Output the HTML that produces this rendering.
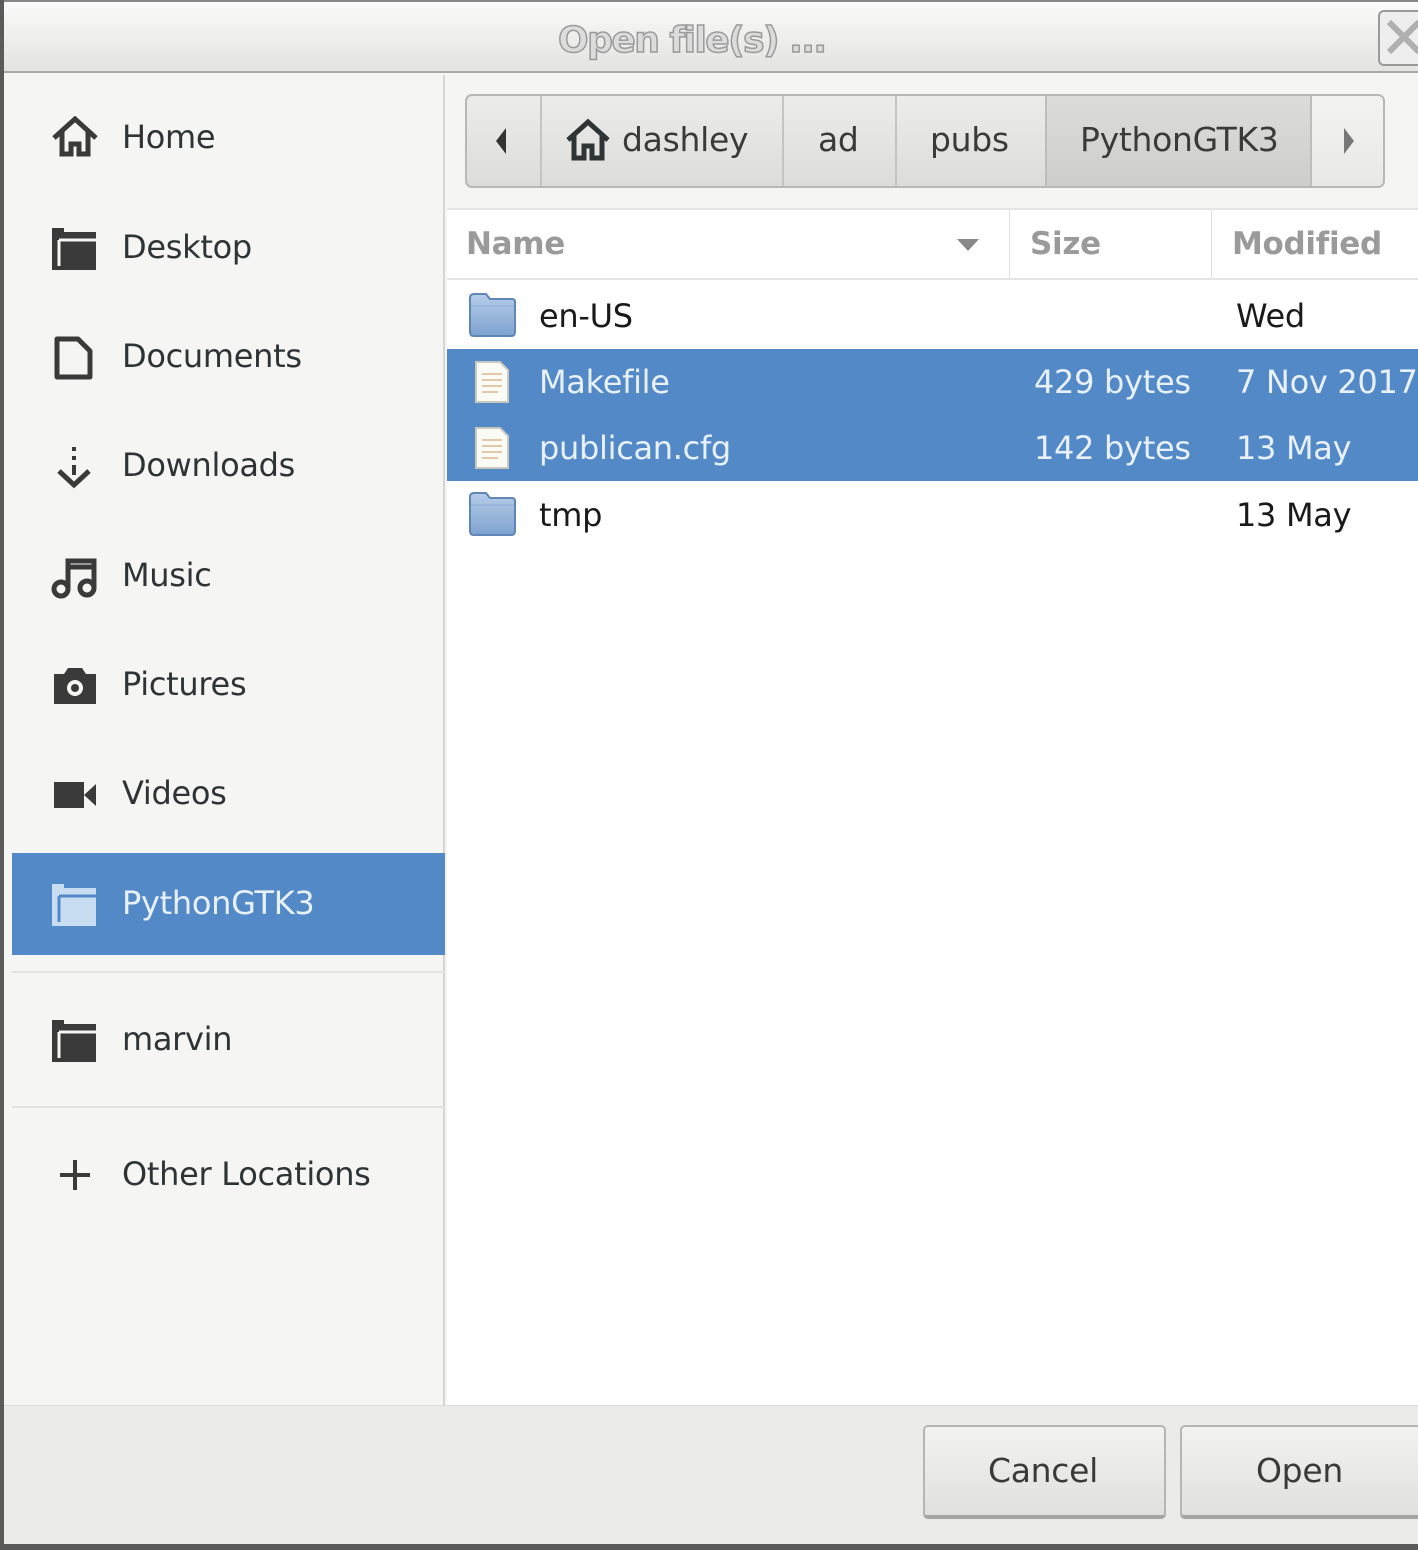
<!DOCTYPE html>
<html><head><meta charset="utf-8"><style>
*{margin:0;padding:0;box-sizing:border-box}
body{width:1418px;height:1550px;overflow:hidden;background:#f5f5f3;font-family:"DejaVu Sans","Liberation Sans",sans-serif;position:relative;color:#2e3436}
.a{position:absolute}
.t{position:absolute;height:50px;line-height:50px;font-size:32px;white-space:nowrap;letter-spacing:-0.3px}
</style></head><body>
<div class="a" style="left:0;top:0;width:4px;height:1550px;background:#5a5a5a"></div>
<div class="a" style="left:4px;top:0;width:1414px;height:73px;background:linear-gradient(#fafafa,#e3e3e1);border-bottom:2px solid #a9a9a7;border-top:2px solid #888"></div>
<div class="t" style="left:558px;top:16px;font-size:36px;font-weight:bold;color:#dcdcdc;-webkit-text-stroke:1.5px #9a9a9a;letter-spacing:-1.5px">Open file(s) ...</div>
<div class="a" style="left:1378px;top:10px;width:50px;height:56px;border:2px solid #9a9a9a;border-radius:6px;background:#eee"></div>
<svg class="a" style="left:1385px;top:18px" width="40" height="40"><path d="M4 4L34 34M34 4L4 34" stroke="#b0b0b0" stroke-width="6"/></svg>
<div class="a" style="left:4px;top:75px;width:441px;height:1330px;background:#f5f5f3;border-right:2px solid #d6d6d4"></div>
<div class="a" style="left:447px;top:75px;width:971px;height:1330px;background:#fff"></div>
<div class="a" style="left:447px;top:75px;width:971px;height:133px;background:#f5f5f3"></div>
<div class="a" style="left:465px;top:94px;width:920px;height:94px;border:2px solid #b8b8b6;border-radius:7px;background:linear-gradient(#ececea,#dcdcda);overflow:hidden">
 <div class="a" style="left:73px;top:0;width:2px;height:94px;background:#c4c4c2"></div>
 <div class="a" style="left:315px;top:0;width:2px;height:94px;background:#c4c4c2"></div>
 <div class="a" style="left:428px;top:0;width:2px;height:94px;background:#c4c4c2"></div>
 <div class="a" style="left:578px;top:0;width:267px;height:94px;background:linear-gradient(#dcdcda,#cdcdcb);border-left:2px solid #bdbdbb;border-right:2px solid #bdbdbb"></div>
 <div class="a" style="left:845px;top:0;width:75px;height:94px;background:linear-gradient(#f3f3f1,#e8e8e6)"></div>
</div>
<svg class="a" style="left:492px;top:126px" width="20" height="30"><path d="M14 2L4 15L14 28Z" fill="#333"/></svg>
<svg class="a" style="left:1340px;top:126px" width="20" height="30"><path d="M4 2L14 15L4 28Z" fill="#777"/></svg>
<svg class="a" style="left:564px;top:118px" width="48" height="44"><path d="M4 22L24 4L44 22M10 18V40H20V28H28V40H38V18" fill="none" stroke="#2e3436" stroke-width="5"/></svg>
<div class="t" style="left:622px;top:115px;font-size:33px;color:#3a3a3a">dashley</div>
<div class="t" style="left:818px;top:115px;font-size:33px;color:#3a3a3a">ad</div>
<div class="t" style="left:930px;top:115px;font-size:33px;color:#3a3a3a">pubs</div>
<div class="t" style="left:1080px;top:115px;font-size:33px;color:#3a3a3a">PythonGTK3</div>
<div class="a" style="left:447px;top:208px;width:971px;height:2px;background:#e4e4e2"></div>
<div class="a" style="left:447px;top:278px;width:971px;height:2px;background:#e4e4e2"></div>
<div class="a" style="left:1009px;top:210px;width:1px;height:68px;background:#e0e0de"></div>
<div class="a" style="left:1211px;top:210px;width:1px;height:68px;background:#e0e0de"></div>
<div class="t" style="left:466px;top:219px;font-weight:bold;color:#9a9a9a;font-size:31px">Name</div>
<svg class="a" style="left:955px;top:237px" width="26" height="16"><path d="M2 2H24L13 14Z" fill="#888"/></svg>
<div class="t" style="left:1030px;top:219px;font-weight:bold;color:#9a9a9a;font-size:31px">Size</div>
<div class="t" style="left:1232px;top:219px;font-weight:bold;color:#9a9a9a;font-size:31px">Modified</div>
<div class="a" style="left:447px;top:349px;width:971px;height:132px;background:#5289c6"></div>
<svg class="a" style="left:468px;top:292px" width="50" height="46"><defs><linearGradient id="fg" x1="0" y1="0" x2="0" y2="1"><stop offset="0" stop-color="#b6cde8"/><stop offset="1" stop-color="#7ea3d0"/></linearGradient></defs><path d="M2 6Q2 2 6 2H18L22 7H44Q47 7 47 10V40Q47 44 43 44H6Q2 44 2 40Z" fill="url(#fg)" stroke="#5f86b5" stroke-width="2"/><path d="M3 14H46" stroke="#9ab8dd" stroke-width="2"/></svg>
<svg class="a" style="left:468px;top:491px" width="50" height="46"><path d="M2 6Q2 2 6 2H18L22 7H44Q47 7 47 10V40Q47 44 43 44H6Q2 44 2 40Z" fill="url(#fg)" stroke="#5f86b5" stroke-width="2"/><path d="M3 14H46" stroke="#9ab8dd" stroke-width="2"/></svg>
<svg class="a" style="left:474px;top:360px" width="36" height="44"><path d="M2 2H26L34 10V42H2Z" fill="#fbfbf6" stroke="#c9c9c0" stroke-width="2"/><path d="M8 14H28M8 20H28M8 26H28M8 32H24" stroke="#e3c9a8" stroke-width="2"/></svg>
<svg class="a" style="left:474px;top:426px" width="36" height="44"><path d="M2 2H26L34 10V42H2Z" fill="#fbfbf6" stroke="#c9c9c0" stroke-width="2"/><path d="M8 14H28M8 20H28M8 26H28M8 32H24" stroke="#e3c9a8" stroke-width="2"/></svg>
<div class="t" style="left:539px;top:291px;color:#1a1a1a">en-US</div>
<div class="t" style="left:1236px;top:291px;color:#1a1a1a">Wed</div>
<div class="t" style="left:539px;top:357px;color:#e8f0fa">Makefile</div>
<div class="t" style="left:1034px;top:357px;color:#e8f0fa">429 bytes</div>
<div class="t" style="left:1236px;top:357px;color:#e8f0fa">7 Nov 2017</div>
<div class="t" style="left:539px;top:423px;color:#e8f0fa">publican.cfg</div>
<div class="t" style="left:1034px;top:423px;color:#e8f0fa">142 bytes</div>
<div class="t" style="left:1236px;top:423px;color:#e8f0fa">13 May</div>
<div class="t" style="left:539px;top:490px;color:#1a1a1a">tmp</div>
<div class="t" style="left:1236px;top:490px;color:#1a1a1a">13 May</div>
<div class="a" style="left:12px;top:853px;width:433px;height:102px;background:#5289c6"></div>
<div class="a" style="left:12px;top:971px;width:433px;height:2px;background:#e2e2e0"></div>
<div class="a" style="left:12px;top:1106px;width:433px;height:2px;background:#e2e2e0"></div>
<svg class="a" style="left:50px;top:116px" width="50" height="42"><path d="M4 22L25 3L46 22M12 16V38H21V28H29V38H38V16" fill="none" stroke="#3a3a3a" stroke-width="5"/></svg>
<svg class="a" style="left:50px;top:226px" width="50" height="46"><path d="M2 2H14V6H46V44H2Z" fill="#3a3a3a"/><path d="M9 14V40" stroke="#f5f5f3" stroke-width="3"/><path d="M9 14H46" stroke="#f5f5f3" stroke-width="3"/></svg>
<svg class="a" style="left:54px;top:336px" width="40" height="44"><path d="M3 3H24L36 15V41H3Z" fill="none" stroke="#3a3a3a" stroke-width="5" stroke-linejoin="round"/></svg>
<svg class="a" style="left:54px;top:445px" width="40" height="44"><path d="M20 2V6M20 11V15M20 20V30" stroke="#3a3a3a" stroke-width="4"/><path d="M5 26L20 40L35 26" fill="none" stroke="#3a3a3a" stroke-width="5"/></svg>
<svg class="a" style="left:50px;top:555px" width="48" height="44"><path d="M18 34V6H44V32M18 12H44" fill="none" stroke="#3a3a3a" stroke-width="5"/><circle cx="11" cy="34" r="7" fill="none" stroke="#3a3a3a" stroke-width="5"/><circle cx="37" cy="33" r="7" fill="none" stroke="#3a3a3a" stroke-width="5"/></svg>
<svg class="a" style="left:52px;top:666px" width="46" height="40"><path d="M2 8H12L16 2H30L34 8H44V38H2Z" fill="#3a3a3a"/><circle cx="23" cy="22" r="8" fill="#f5f5f3"/><circle cx="23" cy="22" r="4" fill="#3a3a3a"/></svg>
<svg class="a" style="left:52px;top:780px" width="46" height="30"><rect x="2" y="2" width="30" height="26" fill="#3a3a3a"/><path d="M32 15L44 4V26Z" fill="#3a3a3a"/></svg>
<svg class="a" style="left:50px;top:882px" width="50" height="46"><path d="M2 2H14V6H46V44H2Z" fill="#c8dcf2"/><path d="M9 14V40" stroke="#5289c6" stroke-width="3"/><path d="M9 14H46" stroke="#5289c6" stroke-width="3"/></svg>
<svg class="a" style="left:50px;top:1018px" width="50" height="46"><path d="M2 2H14V6H46V44H2Z" fill="#3a3a3a"/><path d="M9 14V40" stroke="#f5f5f3" stroke-width="3"/><path d="M9 14H46" stroke="#f5f5f3" stroke-width="3"/></svg>
<svg class="a" style="left:58px;top:1158px" width="34" height="34"><path d="M17 2V32M2 17H32" stroke="#3a3a3a" stroke-width="4"/></svg>
<div class="t" style="left:122px;top:112px">Home</div>
<div class="t" style="left:122px;top:222px">Desktop</div>
<div class="t" style="left:122px;top:331px">Documents</div>
<div class="t" style="left:122px;top:440px">Downloads</div>
<div class="t" style="left:122px;top:550px">Music</div>
<div class="t" style="left:122px;top:659px">Pictures</div>
<div class="t" style="left:122px;top:768px">Videos</div>
<div class="t" style="left:122px;top:878px;color:#e8f0fa">PythonGTK3</div>
<div class="t" style="left:122px;top:1014px">marvin</div>
<div class="t" style="left:122px;top:1149px">Other Locations</div>
<div class="a" style="left:4px;top:1405px;width:1414px;height:140px;background:#ebebe9;border-top:1px solid #dcdcda"></div>
<div class="a" style="left:0;top:1544px;width:1418px;height:6px;background:#5a5a5a"></div>
<div class="a" style="left:923px;top:1425px;width:243px;height:94px;border:2px solid #b5b5b3;border-bottom:4px solid #a5a5a3;border-radius:5px;background:linear-gradient(#f2f2f0,#e0e0de)"></div>
<div class="a" style="left:1180px;top:1425px;width:250px;height:94px;border:2px solid #b5b5b3;border-bottom:4px solid #a5a5a3;border-radius:5px;background:linear-gradient(#f2f2f0,#e0e0de)"></div>
<div class="t" style="left:988px;top:1446px;font-size:33px;color:#3a3a3a">Cancel</div>
<div class="t" style="left:1256px;top:1446px;font-size:33px;color:#3a3a3a">Open</div>
</body></html>
